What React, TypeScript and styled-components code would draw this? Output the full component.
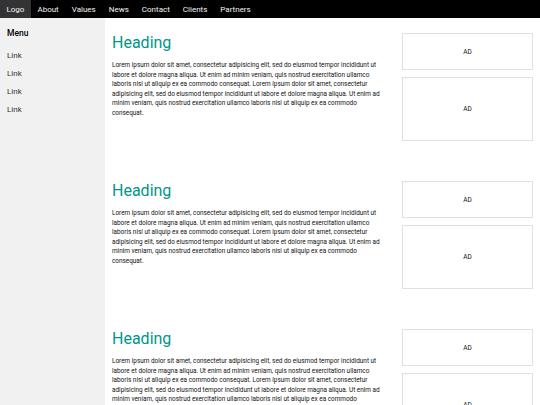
import styled, { createGlobalStyle } from 'styled-components';

const navItems = ['About', 'Values', 'News', 'Contact', 'Clients', 'Partners'];
const links = ['Link', 'Link', 'Link', 'Link'];
const lorem =
  'Lorem ipsum dolor sit amet, consectetur adipisicing elit, sed do eiusmod tempor incididunt ut labore et dolore magna aliqua. Ut enim ad minim veniam, quis nostrud exercitation ullamco laboris nisi ut aliquip ex ea commodo consequat. Lorem ipsum dolor sit amet, consectetur adipisicing elit, sed do eiusmod tempor incididunt ut labore et dolore magna aliqua. Ut enim ad minim veniam, quis nostrud exercitation ullamco laboris nisi ut aliquip ex ea commodo consequat.';

export default function App() {
  return (
    <>
      <GlobalStyle />
      <Page>
        <TopBar>
          <NavItem $active>Logo</NavItem>
          {navItems.map((item) => (
            <NavItem key={item}>{item}</NavItem>
          ))}
        </TopBar>
        <Body>
          <Sidebar>
            <MenuTitle>Menu</MenuTitle>
            {links.map((l, i) => (
              <SideLink key={i}>{l}</SideLink>
            ))}
          </Sidebar>
          <Main>
            {[0, 1, 2].map((i) => (
              <Row key={i}>
                <Article>
                  <Heading>Heading</Heading>
                  <Text>{lorem}</Text>
                </Article>
                <Ads>
                  <Ad $height={37}>AD</Ad>
                  <Ad $height={64}>AD</Ad>
                </Ads>
              </Row>
            ))}
          </Main>
        </Body>
      </Page>
    </>
  );
}

const GlobalStyle = createGlobalStyle`
  html, body {
    margin: 0;
    padding: 0;
    overflow: hidden;
    background: #fff;
  }
  body {
    font-family: Roboto, "Liberation Sans", sans-serif;
    color: #111;
  }
`;

const Page = styled.div`
  display: flex;
  flex-direction: column;
  width: 540px;
  height: 405px;
  overflow: hidden;
`;

const TopBar = styled.nav`
  display: flex;
  height: 18px;
  background: #000;
  flex-shrink: 0;
`;

const NavItem = styled.a<{ $active?: boolean }>`
  display: flex;
  align-items: center;
  padding: 0 6.5px;
  font-size: 8px;
  color: #f2f2f2;
  background: ${(p) => (p.$active ? '#333' : 'transparent')};
`;

const Body = styled.div`
  display: flex;
  flex: 1;
  min-height: 0;
`;

const Sidebar = styled.aside`
  width: 105px;
  flex-shrink: 0;
  background: #f1f1f1;
  display: flex;
  flex-direction: column;
  padding-top: 8px;
`;

const MenuTitle = styled.h4`
  margin: 0 0 7px;
  padding: 0 7px;
  font-size: 8.5px;
  font-weight: 500;
  line-height: 14px;
  color: #000;
`;

const SideLink = styled.a`
  display: block;
  padding: 0 7px;
  font-size: 8px;
  line-height: 18px;
  color: #333;
`;

const Main = styled.main`
  flex: 1;
  padding: 0 7px;
`;

const Row = styled.section`
  display: grid;
  grid-template-columns: 1fr 131px;
  column-gap: 17px;
  padding: 15px 0 25px;
  align-items: start;
`;

const Article = styled.div`
  display: flex;
  flex-direction: column;
`;

const Heading = styled.h2`
  margin: 0;
  font-size: 16px;
  font-weight: 400;
  line-height: 20px;
  color: #009688;
`;

const Text = styled.p`
  margin: 8px 0 0;
  font-size: 6.4px;
  line-height: 9.6px;
  color: #111;
`;

const Ads = styled.div`
  display: flex;
  flex-direction: column;
  gap: 7px;
`;

const Ad = styled.div<{ $height: number }>`
  display: flex;
  align-items: center;
  justify-content: center;
  height: ${(p) => p.$height}px;
  box-sizing: border-box;
  border: 1px solid #e0e0e0;
  font-size: 6.5px;
  color: #111;
`;
